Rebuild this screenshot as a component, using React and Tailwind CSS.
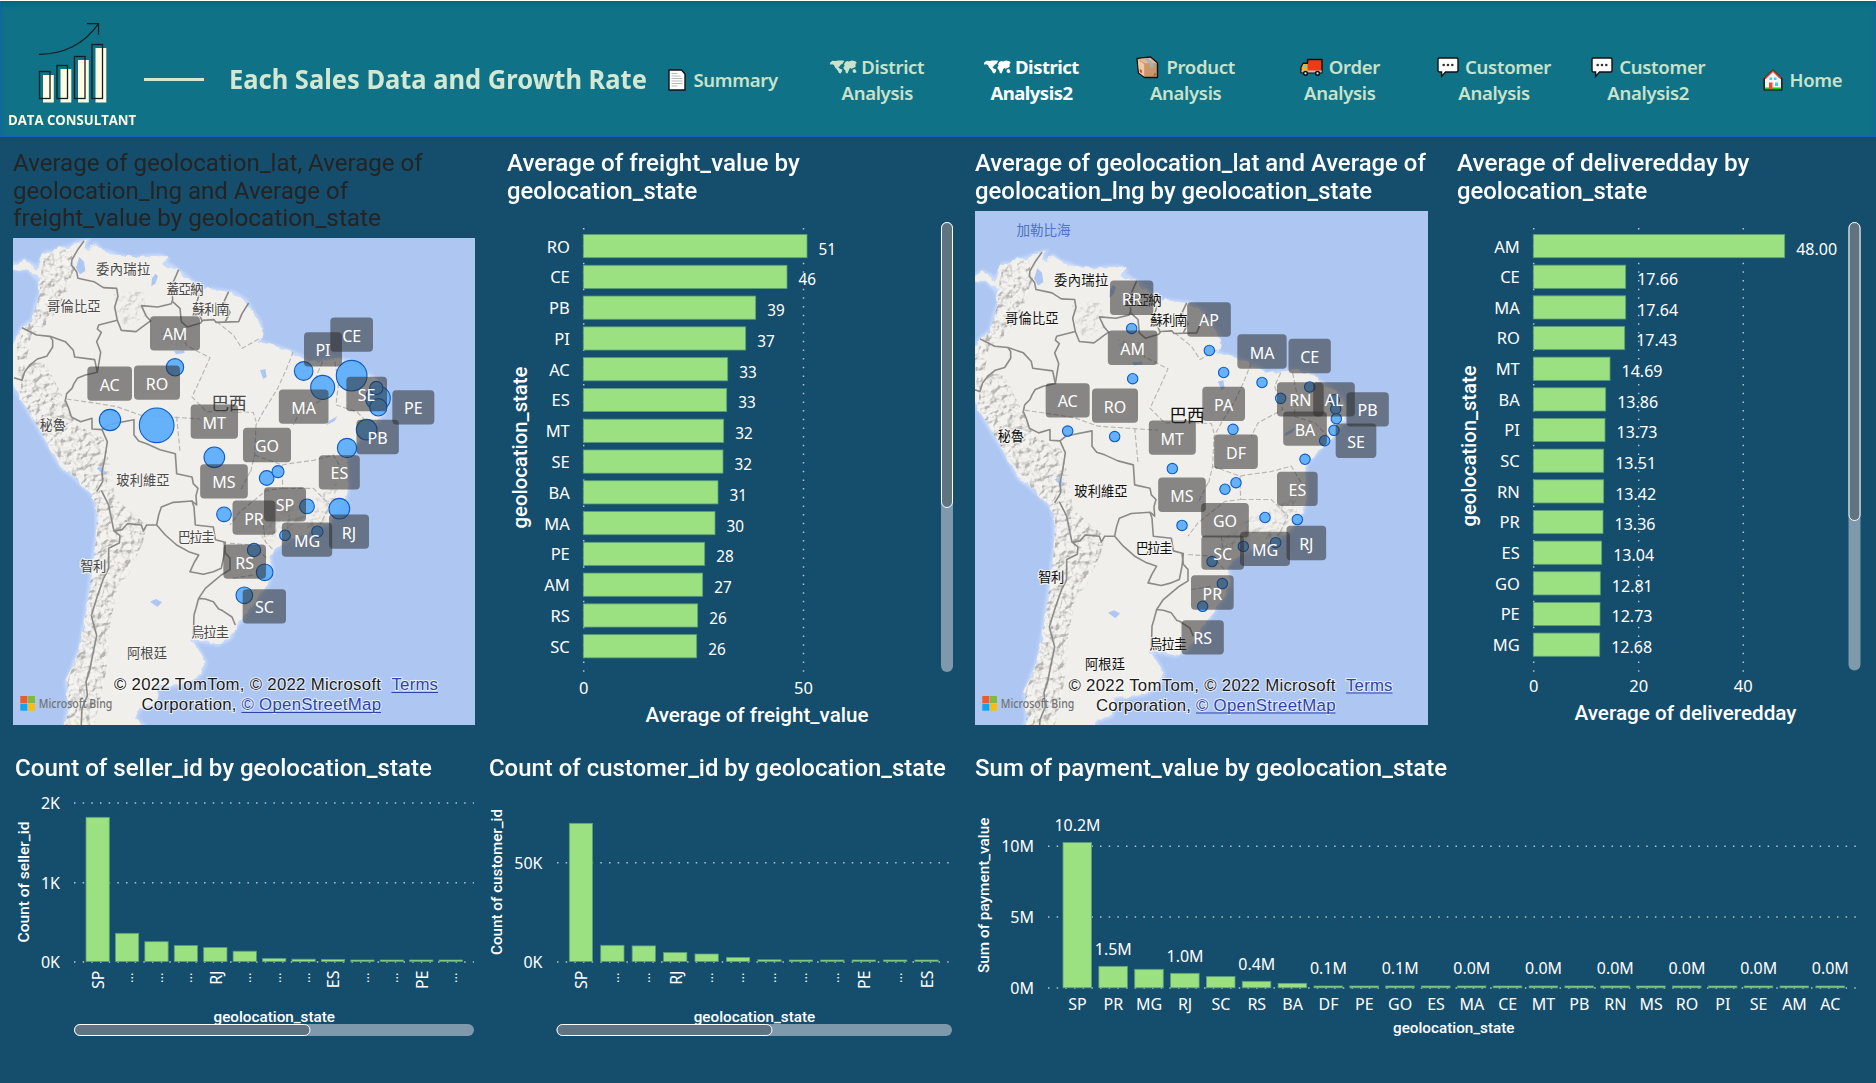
import React from "react";

const SANS = '"Noto Sans", "Open Sans", sans-serif';
const DIN = 'Roboto, "Open Sans", sans-serif';
const CJK = '"Noto Sans CJK TC", "Noto Sans", sans-serif';
const GREEN = "#9be182";

/* ---------- icons ---------- */

const Doc = () => (
  <svg viewBox="0 0 18 22" className="h-[22px] w-[18px]">
    <path d="M1 1h12.5L17 5v16H1z" fill="#fff" stroke="#111" strokeWidth="1.4" />
    <path d="M3.5 4.5h6M3.5 7h9M3.5 9.5h11M3.5 12h11M3.5 14.500h11M3.5 17h6" stroke="#b9b9b9" strokeWidth="1.2" />
  </svg>
);
const WorldMap = () => (
  <svg viewBox="0 0 27 14" className="h-[14px] w-[27px]" fill="currentColor">
    <path d="M0 2.800 2.500.8l3 .2L8 .4l5.200.1 1 .6-1.700 2.600-2.100 1.400-.7 1.500-1.200.1.300 1.100 1.300 1 2.200.8-.3 2-1.400 2-1.700-.7-1-2.100-1.300-1.600L4.800 7 4 5 2 4.300.3 4.800z" />
    <path d="m14 4.200 1.500-2.400 2-.9 1.300.5L22 .5l3.500.8 1.300 1.600-1.300.9.2 2.600-1.500 1.300-1.500.2-.9 1.200-1-1-1.400.7-.7 2-1.300 2.800-1.500-.6-.7-2.700-1.400-1.300-.4-1.800 1.200-1.500z" />
    <path d="m22.800 9.800 1.500-.9 1.400.8.8 2.600-1.800.8-2-.8z" />
  </svg>
);
const Box = () => (
  <svg viewBox="0 0 23 23" className="h-[23px] w-[23px]">
    <path d="M1 2.500 14.500 1 21.500 7v14.500H8.500L2.500 17z" fill="#c9976a" stroke="#111" strokeWidth="1.400" strokeLinejoin="round" />
    <path d="M1.800 3 14.300 1.800 20.800 7.200H8.600z" fill="#e2b98f" />
    <path d="M1.800 3.600 8.200 8v12.600L3 16.800z" fill="#efc9a2" />
    <path d="M8 2.600 14 7.400v4h3.500v-4L11.500 2.200z" fill="#9fb3bd" />
    <path d="m3.800 13 2 1.300v3l-2-1.400z" fill="#e03a3a" />
    <path d="M17 19.500h2.500v-3z" fill="#8a5a35" />
  </svg>
);
const Truck = () => (
  <svg viewBox="0 0 23 18" className="h-[18px] w-[23px]">
    <path d="M7.500 1.500h14.500v13.200H1V9.500l2-4.300h4.500z" fill="#f03a17" stroke="#111" strokeWidth="1.400" strokeLinejoin="round" />
    <path d="M1.700 9.600 3.500 5.900h4v8.100H1.700z" fill="#fcb514" />
    <path d="M3 9.500 4.200 7h2.300v2.800z" fill="#4fd2f5" />
    <path d="M1.700 12.500h20v2h-20z" fill="#b8c4c9" />
    <g fill="#e8e8e8" stroke="#111" strokeWidth="1.500"><circle cx="5.500" cy="15.300" r="1.900" /><circle cx="17.500" cy="15.300" r="1.900" /></g>
  </svg>
);
const Chat = () => (
  <svg viewBox="0 0 22 21" className="h-[21px] w-[22px]">
    <path d="M2.500 1h17a1.500 1.500 0 0 1 1.500 1.500v11a1.500 1.500 0 0 1-1.500 1.500H8.500L4.600 19.400V15H2.500A1.500 1.500 0 0 1 1 13.500v-11A1.500 1.500 0 0 1 2.500 1z" fill="#fff" stroke="#111" strokeWidth="1.400" />
    <g fill="#333"><circle cx="6.700" cy="8" r="1.300" /><circle cx="11" cy="8" r="1.300" /><circle cx="15.300" cy="8" r="1.300" /></g>
  </svg>
);
const House = () => (
  <svg viewBox="0 0 20 22" className="h-[22px] w-[20px]">
    <path d="M10 1.200 18.800 10v10.800H1.200V10z" fill="#f4f4f4" stroke="#111" strokeWidth="1.400" strokeLinejoin="round" />
    <path d="M2 9.800 10 2l8 7.800" fill="none" stroke="#e0482c" strokeWidth="1.600" />
    <path d="M1.800 18.500h16.400v2H1.800z" fill="#22c51a" />
    <path d="M6 13.500h3.500v6.500H6z" fill="#e8502e" />
    <path d="M6.500 8.500H9V11H6.500zM11 8.500h2.500V11H11zM12 13.500h3V17h-3z" fill="#3ccdf2" />
  </svg>
);

const NAV = [
  { icon: Doc, a: "Summary", gap: "gap-[7px]" },
  { icon: WorldMap, a: "District", b: "Analysis", gap: "gap-1" },
  { icon: WorldMap, a: "District", b: "Analysis2", gap: "gap-1", active: true },
  { icon: Box, a: "Product", b: "Analysis", gap: "gap-[7px]" },
  { icon: Truck, a: "Order", b: "Analysis", gap: "gap-[6px]" },
  { icon: Chat, a: "Customer", b: "Analysis", gap: "gap-[6px]" },
  { icon: Chat, a: "Customer", b: "Analysis2", gap: "gap-[6px]" },
  { icon: House, a: "Home", gap: "gap-[7px]" },
];

function Logo() {
  const bars = [[39.5, 71.5], [57, 65.5], [74.5, 56.5], [92, 44.500]];
  return (
    <svg viewBox="30 18 84 88" className="h-[88px] w-[84px]" fill="none">
      {bars.map(([x, y]) => (
        <g key={x}>
          <rect x={x + 3.500} y={y + 3.500} width="10.800" height={99 - y} fill="#fdfbe3" />
          <rect x={x} y={y} width="10.500" height={99 - y - 0.500} stroke="#10201f" strokeWidth="1.300" />
        </g>
      ))}
      <path d="M39 54.300C62 54.500 84 45 98.500 23.700M87 23.700h11.500v11" stroke="#10201f" strokeWidth="1.200" />
    </svg>
  );
}

function Header() {
  return (
    <header className="flex h-[136px] w-full overflow-hidden border border-t-0 border-[#1162b8] bg-[#0f7287] shadow-[inset_0_5px_6px_-3px_#0b5f7c]">
      <div className="flex w-[143px] shrink-0 flex-col items-center pt-[17px] pr-[2px]">
        <Logo />
        <div className="mt-[5px] w-[128px] whitespace-nowrap font-['Open_Sans'] text-[13.500px] leading-[18px] font-bold text-[#fdfbe3]">
          <span className="inline-block origin-left scale-x-[0.975]">DATA CONSULTANT</span>
        </div>
      </div>
      <div className="mt-[77px] h-[3px] w-[60px] shrink-0 bg-[#d3e8d2]" />
      <h1 className="mt-[59px] ml-[25px] w-[417px] shrink-0 whitespace-nowrap font-['Noto_Sans'] text-[26px] leading-[38px] font-bold text-[#d3e8d2]">
        <span className="inline-block origin-left scale-x-[0.98]">Each Sales Data and Growth Rate</span>
      </h1>
      <nav className="flex pt-[27px]">
        {NAV.map(({ icon: Icon, a, b, gap, active }, i) => (
          <div
            key={i}
            className={`flex w-[154.200px] shrink-0 flex-col items-center justify-center pb-1 font-['Noto_Sans'] text-[18.500px] leading-[26px] ${active ? "font-bold tracking-[-0.5px] text-white" : "font-semibold tracking-[-0.3px] text-[#c9e2cb]"}`}
          >
            <div className={`flex h-[26px] items-center ${gap}`}>
              <Icon />
              <span>{a}</span>
            </div>
            {b && <div>{b}</div>}
          </div>
        ))}
      </nav>
    </header>
  );
}

/* ---------- shared chart parts ---------- */

function Txt({ x, y, len, size = 16.500, anchor = "start", family = SANS, weight = 400, fill = "#fff", rotate, children }) {
  return (
    <text
      x={x} y={y} fontFamily={family} fontSize={size} fontWeight={weight} fill={fill} textAnchor={anchor}
      textLength={len} lengthAdjust={len ? "spacingAndGlyphs" : undefined}
      transform={rotate ? `rotate(-90 ${x} ${y})` : undefined}
    >
      {children}
    </text>
  );
}

const Grid = ({ x1, y1, x2, y2 }) => (
  <line x1={x1} y1={y1} x2={x2} y2={y2} stroke="#b4c3cd" strokeWidth="1.500" strokeDasharray="1.500 7.170" />
);

const Bar = ({ x, y, w, h }) => (
  <rect x={x} y={y} width={w} height={h} fill={GREEN} stroke="#5a9d78" strokeWidth="0.800" />
);

function Scroll({ x, y, w, h, thumb, vertical }) {
  return (
    <g>
      <rect x={x} y={y} width={w} height={h} rx="6" fill="#7d99ab" />
      <rect x={x + 0.500} y={y + 0.500} width={vertical ? w - 1 : thumb} height={vertical ? thumb : h - 1} rx="5.500" fill="#5f7380" stroke="#fff" strokeWidth="1" />
    </g>
  );
}

function Title({ lines, dark, className }) {
  return (
    <h2 className={`whitespace-nowrap font-[Roboto] text-[23.500px] leading-[27.500px] ${dark ? "font-normal text-[#252423]" : "font-medium text-white"} ${className}`}>
      {lines.map((l) => (
        <span key={l[0]} className="block w-max origin-left" ref={(el) => { if (el) el.style.transform = `scaleX(${l[1] / el.offsetWidth})`; }}>
          {l[0]}
        </span>
      ))}
    </h2>
  );
}

/* ---------- maps ---------- */

const LAND =
  "M30 112L52 120 72 106 98 118 112 134 122 112 134 84 160 82 180 70 205 66 240 50 262 46 252 62 262 74 286 58 304 76 330 82 354 92 402 100 440 94 484 92 502 102 490 114 512 122 540 140 572 166 602 190 650 196 700 202 738 226 752 252 780 292 784 326 772 350 806 358 838 368 872 380 908 396 922 416 948 410 1000 402 1050 408 1086 436 1122 460 1154 488 1168 520 1160 552 1132 592 1102 620 1072 652 1044 684 1040 720 1046 780 1034 828 1012 862 986 894 950 914 902 930 860 946 826 970 808 992 818 1040 800 1082 762 1132 730 1176 706 1206 690 1240 654 1258 604 1248 572 1242 598 1278 616 1312 600 1350 560 1374 500 1384 464 1384 472 1410 460 1440 418 1452 404 1480 432 1502 410 1540 188 1540 206 1440 200 1372 216 1330 240 1270 256 1180 270 1080 280 1000 290 930 290 852 280 812 222 756 182 726 142 654 100 584 60 514 36 474 30 380 48 344 66 308 98 284 108 240 122 200 116 164 100 150 84 130 60 134 30 128Z";

const BORDERS = [
  "M252 48L232 76 216 104 214 120 230 140 234 160 282 170 310 188 350 190 354 214 344 246 352 286 296 300 292 312 304 322 290 350 302 382 292 442",
  "M352 286L364 316 408 320 440 296 452 288 438 272 424 242 474 246 514 236 518 224 516 180 536 134",
  "M518 230L540 250 544 290 562 306 602 294 608 286 642 284 648 292 716 290 726 266 746 234",
  "M598 206L588 240 606 288M686 200L672 230 690 262 676 290",
  "M66 308L110 330 150 334 196 350 220 376 224 396 284 404 292 442 256 450 232 460 222 476 216 490 200 506 196 526 206 550 214 576 242 590 276 580 276 612 306 614",
  "M150 334L158 346 158 366 140 394 112 402 90 420 74 440 66 466 42 458",
  "M306 614L324 600 350 594 402 584 402 630 416 648 440 656 480 674 526 686 530 746 576 756 580 776 594 790 588 812 590 840 576 828",
  "M306 614L322 650 314 702 306 740 308 770 290 800M304 796L316 820 326 840 334 880 342 918",
  "M342 918L366 914 382 896 424 900 430 918 440 900 470 900 476 870 484 846 520 832 576 828 582 846 586 900 640 906 646 944 676 952 672 990 664 1030 640 1040 610 1048 570 1040 582 1014 596 990 566 980 530 960 496 930 470 900",
  "M672 952L676 984 690 1000 690 1034 664 1050 640 1070 616 1090 596 1120 588 1150 582 1170 580 1236M596 1120L616 1122 640 1130 656 1152 666 1156 696 1176 706 1200",
  "M342 918L360 932 358 954 326 970 326 1030 310 1062 290 1120 274 1172 290 1232 276 1300 270 1332 258 1370 262 1412 246 1450 242 1540",
];

const STATES =
  "M546 330L560 362 630 398 604 456 576 516 620 560 760 562 768 590M880 380L856 440 832 492 790 560 768 600 764 690 752 740M968 410L950 450 974 520 900 560 880 600M1004 410L1016 470 1008 540 1070 560 1110 600M200 522L290 535 350 545 420 570 600 582M530 575L540 680M764 690L846 720 866 716 940 706 1000 690 1030 740M846 720L848 790 800 796 720 860 690 900M790 900L796 950 820 975M750 740L720 800M650 290L700 330 726 370 780 340M690 955L760 960 800 1000M700 1060L760 1050M850 790L940 790 990 840 960 900";

const ANDES =
  "M130 90L210 70 225 130 200 200 150 290 95 330 80 400 140 420 190 520 230 600 310 640 330 720 345 820 440 900 430 950 390 1040 350 1100 330 1200 320 1330 300 1430 270 1540 190 1540 206 1440 200 1372 240 1270 270 1080 290 852 222 756 142 654 60 514 50 360 108 240 122 150Z";

const COUNTRIES = [
  ["委內瑞拉", 288, 147, 163], ["哥倫比亞", 141, 259, 161], ["蓋亞納", 499, 206, 112], ["蘇利南", 576, 267, 113],
  ["秘魯", 119, 614, 79], ["玻利維亞", 349, 779, 160], ["巴拉圭", 533, 950, 111], ["智利", 241, 1038, 78],
  ["烏拉圭", 574, 1237, 113], ["阿根廷", 381, 1299, 120],
];

function Geography({ id, ink }) {
  return (
    <g transform="translate(0 225) scale(0.33333)">
      <defs>
        <clipPath id={`${id}-land`}><path d={LAND} /></clipPath>
        <filter id={`${id}-relief`} x="0" y="0" width="1" height="1">
          <feTurbulence type="fractalNoise" baseFrequency="0.045" numOctaves="3" seed="8" result="n" />
          <feDiffuseLighting in="n" surfaceScale="34" diffuseConstant="1.15" lightingColor="#ffffff" result="l"><feDistantLight azimuth="225" elevation="60" /></feDiffuseLighting>
          <feComposite in="l" in2="SourceAlpha" operator="in" />
        </filter>
        <filter id={`${id}-soft`}><feGaussianBlur stdDeviation="5" /></filter>
        <filter id={`${id}-fray`} filterUnits="userSpaceOnUse" x="0" y="-80" width="1450" height="1640">
          <feTurbulence type="fractalNoise" baseFrequency="0.035" numOctaves="2" seed="3" result="n" />
          <feDisplacementMap in="SourceGraphic" in2="n" scale="24" xChannelSelector="R" yChannelSelector="G" />
        </filter>
      </defs>
      <path d={LAND} fill="#c7dafa" stroke="#c7dafa" strokeWidth="12" filter={`url(#${id}-soft)`} />
      <path d={LAND} fill="#f1efeb" filter={`url(#${id}-fray)`} />
      <g clipPath={`url(#${id}-land)`}>
        <path d={ANDES} filter={`url(#${id}-relief)`} opacity="0.24" />
        <path d="M340 200L430 200 440 270 380 310 355 270ZM860 840L980 800 1010 760 1020 850 960 900 850 930 800 960 780 930ZM480 310L560 320 560 370 490 350Z" filter={`url(#${id}-relief)`} opacity="0.12" />
      </g>
      <g fill="#adc6f2">
        <path d="M238 96l14 14 4 28-16 10-12-20z" />
        <path d="M456 160l10-14 8 8-8 22-12 8zM780 436l16-4 4 24-10 6zM450 1130l18-8 18 10-14 14zM290 730l14-8 12 20-6 8zM522 378l30-2 2 8-26 4zM982 590l30-16-8 14-24 12z" />
      </g>
      <path d={STATES} fill="none" stroke="#b9b7b4" strokeWidth="3.500" strokeDasharray="15 7" />
      <g fill="none" stroke="#8b8a88" strokeWidth="4.800" strokeLinejoin="round">
        {BORDERS.map((d) => <path key={d} d={d} />)}
      </g>
      <g fontFamily={CJK} fill={ink} stroke="#f6f5f2" strokeWidth="7" paintOrder="stroke" strokeOpacity="0.8" fontSize="40">
        {COUNTRIES.map(([t, x, y, w]) => <text key={t} x={x} y={y} textLength={w}>{t}</text>)}
        <text x="634" y="556" fontSize="54" textLength="106">巴西</text>
      </g>
    </g>
  );
}

function Attribution({ x, y, logoX }) {
  const halo = { stroke: "#fff", strokeWidth: 2, paintOrder: "stroke", strokeOpacity: 0.7 };
  return (
    <g>
      <g transform={`translate(${logoX} 696)`}>
        <path d="M0 0h7v7H0z" fill="#f1592a" /><path d="M7.700 0h7v7h-7z" fill="#80bb3c" />
        <path d="M0 7.700h7v7H0z" fill="#12a5ee" /><path d="M7.700 7.700h7v7h-7z" fill="#fbbc12" />
        <text x="18.500" y="12.300" fontFamily={SANS} fontSize="11.800" fontWeight="500" fill="#737373" textLength="73.500" lengthAdjust="spacingAndGlyphs">Microsoft Bing</text>
      </g>
      <g fontFamily='"Liberation Sans", sans-serif' fontSize="16.800" fill="#1b1b1b" {...halo}>
        <text x={x} y={y} textLength="267">© 2022 TomTom, © 2022 Microsoft</text>
        <text x={x + 27.500} y={y + 20} textLength="95">Corporation,</text>
        <g fill="#2c44a8">
          <text x={x + 277.500} y={y} textLength="46.500">Terms</text>
          <text x={x + 127.500} y={y + 20} textLength="139.500">© OpenStreetMap</text>
        </g>
      </g>
      <path d={`M${x + 277.500} ${y + 2.500}h46.500M${x + 127.500} ${y + 22.500}h139.500`} stroke="#2c44a8" strokeWidth="1.200" />
    </g>
  );
}

function MapView({ x0, y0, w, h, shift, dots, tags, ink, id, attribution, extra, className }) {
  return (
    <svg viewBox={`${x0} ${y0} ${w} ${h}`} className={className}>
      <rect x={x0} y={y0} width={w} height={h} fill="#adc6f2" />
      <g transform={`translate(${shift[0]} ${shift[1]})`}><Geography id={id} ink={ink} /></g>
      {extra}
      {dots.map(([x, y, r], i) => <circle key={i} cx={x} cy={y} r={r} fill="#5aadfb" fillOpacity="0.920" stroke="#0f5bc6" strokeWidth="1.100" />)}
      {tags.map(([t, x, y, bw]) => <rect key={t} x={x - bw / 2} y={y - 17.200} width={bw} height="34.400" rx="4" fill="#2c2c2c" fillOpacity="0.540" />)}
      {tags.map(([t, x, y]) => <Txt key={t} x={x} y={y + 7} anchor="middle" size="16">{t}</Txt>)}
      {attribution}
    </svg>
  );
}

const p1 = (x, y) => [x / 3, y / 3 + 225];
const p2 = (x, y) => [x / 3 + 960, y / 2.904 + 200];

const DOTS1 = [
  [525, 427, 26], [911, 438, 28], [968, 487, 36], [1055, 452, 46], [1134, 520, 37], [1129, 489, 20], [1135, 547, 26],
  [1100, 614, 31], [1041, 669, 29], [330, 585, 32], [470, 601, 52], [643, 697, 31], [800, 759, 22], [834, 740, 18],
  [672, 868, 22], [921, 844, 22], [1018, 851, 31], [855, 931, 16], [952, 920, 17], [762, 975, 20], [794, 1042, 25], [733, 1111, 25],
].map(([x, y, r]) => [...p1(x, y), r / 3]);

const TAGS1 = [
  ["AM", 525, 325, 150], ["PI", 969, 373, 114], ["CE", 1055, 329, 128], ["AC", 329, 476, 134], ["RO", 471, 473, 138],
  ["SE", 1100, 507, 122], ["PE", 1240, 547, 126], ["MA", 911, 545, 149], ["MT", 643, 590, 142], ["PB", 1133, 636, 127],
  ["GO", 801, 660, 144], ["ES", 1018, 742, 123], ["MS", 672, 769, 143], ["SP", 855, 838, 126], ["PR", 762, 878, 129],
  ["RJ", 1047, 920, 120], ["MG", 921, 944, 151], ["RS", 734, 1010, 128], ["SC", 793, 1144, 130],
].map(([t, x, y, w]) => [t, ...p1(x, y), w / 3]);

const DOTS2 = [
  [515, 373], [748, 437], [791, 501], [906, 530], [518, 519], [962, 576], [1049, 543], [1123, 580], [1127, 607], [1129, 635],
  [1122, 669], [1094, 699], [1035, 753], [323, 671], [464, 687], [819, 666], [637, 780], [795, 840], [828, 821], [666, 945],
  [915, 922], [1012, 928], [850, 1006], [947, 995], [756, 1050], [787, 1114], [728, 1180],
].map(([x, y]) => [...p2(x, y), 5.200]);

const TAGS2 = [
  ["RR", 515, 284, 130], ["AP", 747, 347, 131], ["AM", 518, 429, 149], ["MA", 906, 440, 148], ["CE", 1049, 453, 127],
  ["AC", 323, 582, 132], ["RO", 465, 597, 138], ["PA", 791, 592, 128], ["RN", 1021, 579, 140], ["AL", 1122, 579, 125],
  ["PB", 1223, 608, 127], ["BA", 1035, 664, 131], ["SE", 1188, 699, 122], ["MT", 637, 690, 141], ["DF", 828, 731, 131],
  ["MS", 666, 856, 143], ["ES", 1012, 839, 122], ["GO", 795, 930, 143], ["RJ", 1039, 996, 119], ["SC", 788, 1024, 128],
  ["MG", 915, 1013, 150], ["PR", 757, 1140, 128], ["RS", 728, 1270, 127],
].map(([t, x, y, w]) => [t, ...p2(x, y), w / 3]);

/* ---------- bar charts ---------- */

const FREIGHT = [
  ["RO", 51, 807], ["CE", 46, 787], ["PB", 39, 755.700], ["PI", 37, 745.700], ["AC", 33, 727.700], ["ES", 33, 726.700], ["MT", 32, 723.700],
  ["SE", 32, 723], ["BA", 31, 718], ["MA", 30, 715], ["PE", 28, 704.700], ["AM", 27, 702.700], ["RS", 26, 697.700], ["SC", 26, 696.700],
];
const DELIVERED = [
  ["AM", "48.00", 1784.700], ["CE", "17.66", 1625.700], ["MA", "17.64", 1625.700], ["RO", "17.43", 1624.700], ["MT", "14.69", 1610],
  ["BA", "13.86", 1605.700], ["PI", "13.73", 1605], ["SC", "13.51", 1603.700], ["RN", "13.42", 1603.700], ["PR", "13.36", 1603],
  ["ES", "13.04", 1601.700], ["GO", "12.81", 1600.300], ["PE", "12.73", 1600], ["MG", "12.68", 1599.700],
];

function HBars({ x0, top, pitch, data, ticks, tickY, children }) {
  return (
    <>
      {ticks.map(([t, x]) => (
        <g key={t}>
          <Grid x1={x} y1={228} x2={x} y2={672} />
          <Txt x={x} y={tickY} anchor="middle">{t}</Txt>
        </g>
      ))}
      {data.map(([s, v, end], i) => {
        const y = top + i * pitch;
        return (
          <g key={s}>
            <Bar x={x0} y={y} w={end - x0} h={23.200} />
            <Txt x={x0 - 13.500} y={y + 18} anchor="end">{s}</Txt>
            <Txt x={end + 11.500} y={y + 20} len={String(v).length === 5 ? 41 : 17.500}>{v}</Txt>
          </g>
        );
      })}
      {children}
    </>
  );
}

const SELLER = [817.300, 933.300, 941.700, 945.500, 947.500, 951.200, 958.500, 959.200, 959.500, 960, 960, 960, 960];
const SELLER_L = ["SP", "...", "...", "...", "RJ", "...", "...", "...", "ES", "...", "...", "PE", "..."];
const CUSTOMER = [823.300, 945.300, 945.900, 952.500, 954, 957.500, 959.800, 960, 960, 960, 960, 960];
const CUSTOMER_L = ["SP", "...", "...", "RJ", "...", "...", "...", "...", "...", "PE", "...", "ES"];
const PAYMENT = [
  ["SP", 842.500, "10.2M", 831], ["PR", 966.300, "1.5M", 955], ["MG", 969.300], ["RJ", 973.300, "1.0M", 962], ["SC", 976.500],
  ["RS", 981.300, "0.4M", 970], ["BA", 983.300], ["DF", 986, "0.1M", 974], ["PE", 986], ["GO", 986, "0.1M", 974], ["ES", 986],
  ["MA", 986, "0.0M", 974], ["CE", 986], ["MT", 986, "0.0M", 974], ["PB", 986], ["RN", 986, "0.0M", 974], ["MS", 986],
  ["RO", 986, "0.0M", 974], ["PI", 986], ["SE", 986, "0.0M", 974], ["AM", 986], ["AC", 986, "0.0M", 974],
];

function VBars({ x0, pitch, tops, labels }) {
  return tops.map((y, i) => (
    <g key={i}>
      <Bar x={x0 + i * pitch} y={y} w={23.300} h={Math.max(961.500 - y, 1.500)} />
      <Txt x={x0 + i * pitch + 18} y={labels[i] === "..." ? 972.500 : 970.500} anchor="end" rotate size={labels[i] === "..." ? 13 : 16}>{labels[i]}</Txt>
    </g>
  ));
}

export default function App() {
  return (
    <div className="h-[1083px] w-[1876px] overflow-hidden border-t border-white bg-[#154d6c]">
      <Header />

      <main>
        <section className="flex h-[602px]">
          <div className="w-[490px] pt-[13px]">
            <Title dark className="ml-[13px] h-[88px]" lines={[["Average of geolocation_lat, Average of", 410], ["geolocation_lng and Average of", 335], ["freight_value by geolocation_state", 368]]} />
            <MapView className="ml-[13px] h-[487px] w-[462px]" id="a" x0={13} y0={238} w={462} h={487} shift={[0, 0]} ink="#4a4a4a" dots={DOTS1} tags={TAGS1}
              attribution={<Attribution x={114} y={690} logoX={20.300} />} />
          </div>

          <div className="w-[485px] pt-[13px]">
            <Title className="ml-[17px] h-[60px]" lines={[["Average of freight_value by", 293], ["geolocation_state", 190]]} />
            <svg viewBox="490 210 485 530" className="h-[530px] w-[485px]">
              <HBars x0={583.300} top={234.500} pitch={30.780} data={FREIGHT} ticks={[["0", 583.700], ["50", 803.500]]} tickY={693.500}>
                <Txt x={645.500} y={721.500} len={223} size={19.500} weight={500} family={DIN}>Average of freight_value</Txt>
                <Txt x={526.500} y={528.500} len={162} size={19.500} weight={500} family={DIN} rotate>geolocation_state</Txt>
                <Scroll x={941} y={222} w={12} h={450} thumb={285} vertical />
              </HBars>
            </svg>
          </div>

          <div className="w-[467px] pt-[13px]">
            <Title className="h-[61px]" lines={[["Average of geolocation_lat and Average of", 450.500], ["geolocation_lng by geolocation_state", 397]]} />
            <MapView className="h-[514px] w-[453px]" id="b" x0={975} y0={211} w={453} h={514} shift={[958, 11.200]} ink="#111" dots={DOTS2} tags={TAGS2}
              extra={<Txt x={1016.500} y={235} len={54} size={13.500} family={CJK} fill="#4d71cc">加勒比海</Txt>}
              attribution={<Attribution x={1068.500} y={690.500} logoX={982.300} />} />
          </div>

          <div className="w-[434px] pt-[13px]">
            <Title className="ml-[15px] h-[60px]" lines={[["Average of deliveredday by", 292], ["geolocation_state", 190]]} />
            <svg viewBox="1442 210 434 530" className="h-[530px] w-[434px]">
              <HBars x0={1533.300} top={234.500} pitch={30.660} data={DELIVERED} ticks={[["0", 1533.700], ["20", 1638.700], ["40", 1743.300]]} tickY={692}>
                <Txt x={1574.500} y={719.500} len={222} size={19.500} weight={500} family={DIN}>Average of deliveredday</Txt>
                <Txt x={1476} y={526.500} len={161} size={19.500} weight={500} family={DIN} rotate>geolocation_state</Txt>
                <Scroll x={1848.500} y={222} w={12} h={448.500} thumb={298} vertical />
              </HBars>
            </svg>
          </div>
        </section>

        <section className="flex">
          <div className="w-[480px] pt-4">
            <Title className="ml-[15px] h-[35px]" lines={[["Count of seller_id by geolocation_state", 417]]} />
            <svg viewBox="0 790 480 260" className="h-[260px] w-[480px]">
              {[["2K", 803], ["1K", 882.700], ["0K", 962]].map(([t, y]) => (
                <g key={t}><Grid x1={74} y1={y} x2={474} y2={y} /><Txt x={60} y={y + 6} anchor="end" size={16}>{t}</Txt></g>
              ))}
              <VBars x0={86} pitch={29.420} tops={SELLER} labels={SELLER_L} />
              <Txt x={28.500} y={942.500} len={121} size={14.800} weight={500} family={DIN} rotate>Count of seller_id</Txt>
              <Txt x={213.500} y={1022} len={121.500} size={14.800} weight={500} family={DIN}>geolocation_state</Txt>
              <Scroll x={74} y={1024} w={400} h={12} thumb={235.500} />
            </svg>
          </div>

          <div className="w-[495px] pt-4">
            <Title className="ml-[9px] h-[35px]" lines={[["Count of customer_id by geolocation_state", 457]]} />
            <svg viewBox="480 790 495 260" className="h-[260px] w-[495px]">
              {[["50K", 862.700], ["0K", 962]].map(([t, y]) => (
                <g key={t}><Grid x1={557} y1={y} x2={949} y2={y} /><Txt x={542.500} y={y + 6} anchor="end" size={16}>{t}</Txt></g>
              ))}
              <VBars x0={569.300} pitch={31.420} tops={CUSTOMER} labels={CUSTOMER_L} />
              <Txt x={502} y={955} len={146} size={14.800} weight={500} family={DIN} rotate>Count of customer_id</Txt>
              <Txt x={693.700} y={1022} len={121.500} size={14.800} weight={500} family={DIN}>geolocation_state</Txt>
              <Scroll x={556.500} y={1024} w={395.500} h={12} thumb={215} />
            </svg>
          </div>

          <div className="w-[901px] pt-4">
            <Title className="h-[35px]" lines={[["Sum of payment_value by geolocation_state", 472]]} />
            <svg viewBox="975 790 901 260" className="h-[260px] w-[901px]">
              {[["10M", 846.300], ["5M", 917], ["0M", 988]].map(([t, y]) => (
                <g key={t}><Grid x1={1048} y1={y} x2={1857} y2={y} /><Txt x={1034} y={y + 6} anchor="end" size={16}>{t}</Txt></g>
              ))}
              {PAYMENT.map(([s, y, v, vy], i) => {
                const x = 1063 + i * 35.850;
                return (
                  <g key={s}>
                    <Bar x={x} y={y} w={28.600} h={987.800 - y} />
                    <Txt x={x + 14.500} y={1010} anchor="middle" size={16}>{s}</Txt>
                    {v && <Txt x={x + 14.500} y={vy} anchor="middle" len={v === "10.2M" ? 46 : 37} size={16}>{v}</Txt>}
                  </g>
                );
              })}
              <Txt x={988.500} y={973} len={155.500} size={14.800} weight={500} family={DIN} rotate>Sum of payment_value</Txt>
              <Txt x={1393} y={1033} len={121.500} size={14.800} weight={500} family={DIN}>geolocation_state</Txt>
            </svg>
          </div>
        </section>
      </main>
    </div>
  );
}
